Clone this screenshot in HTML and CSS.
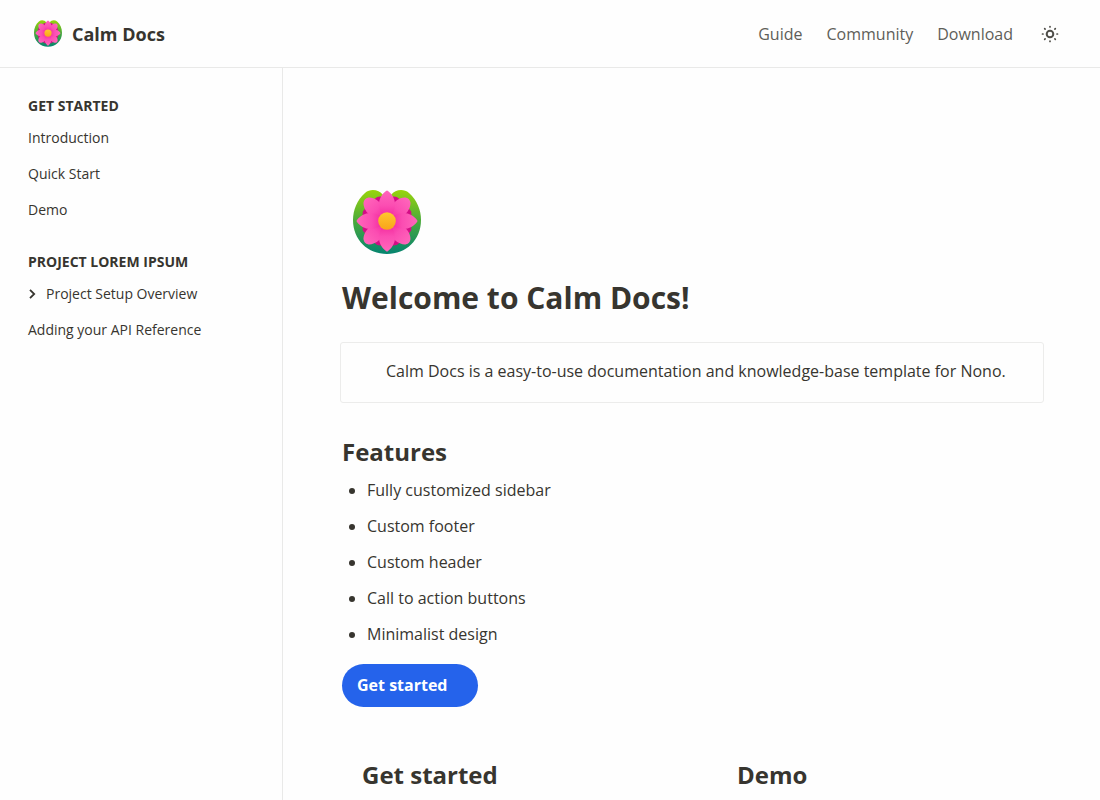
FILE: index.html
```html
<!DOCTYPE html>
<html lang="en">
<head>
<meta charset="utf-8">
<meta name="viewport" content="width=device-width, initial-scale=1">
<title>Calm Docs</title>
<link rel="stylesheet" href="styles.css">
</head>
<body>
<svg class="defs" width="0" height="0" aria-hidden="true">
  <defs>
    <linearGradient id="leaf" x1="0" y1="0" x2="0" y2="1">
      <stop offset="0" stop-color="#98d40c"/>
      <stop offset=".5" stop-color="#48a83c"/>
      <stop offset="1" stop-color="#058470"/>
    </linearGradient>
    <linearGradient id="petal" x1="0" y1="0" x2="0" y2="1">
      <stop offset="0" stop-color="#ff66bb"/>
      <stop offset=".5" stop-color="#fb4db2"/>
      <stop offset="1" stop-color="#f01c96"/>
    </linearGradient>
    <linearGradient id="core" x1="0" y1="0" x2="0" y2="1">
      <stop offset="0" stop-color="#ffc72e"/>
      <stop offset="1" stop-color="#f9a41a"/>
    </linearGradient>
    <symbol id="lotus" viewBox="0 0 68 64">
      <path fill="url(#leaf)" d="M34 14 L30 5 C26 0 18-2 12 3 C4 10 0 20 0 30 C0 50 15 64 34 64 C53 64 68 50 68 30 C68 20 64 10 56 3 C50-2 42 0 38 5 Z"/>
      <g fill="#d30c85">
        <path id="back" d="M34 31 L29 10 Q28 6 34 5 Q40 6 39 10 Z" transform="rotate(22 34 31)"/>
        <use href="#back" transform="rotate(46 34 31)"/>
        <use href="#back" transform="rotate(90 34 31)"/>
        <use href="#back" transform="rotate(136 34 31)"/>
        <use href="#back" transform="rotate(180 34 31)"/>
        <use href="#back" transform="rotate(226 34 31)"/>
        <use href="#back" transform="rotate(270 34 31)"/>
        <use href="#back" transform="rotate(316 34 31)"/>
      </g>
      <g fill="url(#petal)">
        <path id="side" d="M34 31 C29 25 26 19 26 12 C26 7 29 2 31 1 Q34-1 37 1 C39 2 42 7 42 12 C42 19 39 25 34 31 Z" transform="rotate(45 34 31)"/>
        <use href="#side" transform="rotate(90 34 31)"/>
        <use href="#side" transform="rotate(180 34 31)"/>
        <use href="#side" transform="rotate(270 34 31)"/>
        <path id="main" d="M34 31 C29 26 26 20 26 14 C26 9 29 4 33 1 Q34 0 35 1 C39 4 42 9 42 14 C42 20 39 26 34 31 Z"/>
        <use href="#main" transform="rotate(90 34 31)"/>
        <use href="#main" transform="rotate(180 34 31)"/>
        <use href="#main" transform="rotate(270 34 31)"/>
      </g>
      <circle cx="34" cy="31" r="8.8" fill="url(#core)"/>
    </symbol>
  </defs>
</svg>

<header class="topbar">
  <a class="brand" href="#">
    <svg class="brand-logo" aria-hidden="true"><use href="#lotus"/></svg>
    <span>Calm Docs</span>
  </a>
  <nav class="topnav" aria-label="Main">
    <a href="#">Guide</a>
    <a href="#">Community</a>
    <a href="#">Download</a>
    <button class="theme" type="button" aria-label="Toggle theme">
      <svg viewBox="0 0 18 18" width="18" height="18" fill="none" stroke="currentColor" stroke-linecap="round" aria-hidden="true">
        <circle cx="9" cy="9" r="3.3" stroke-width="2"/>
        <path stroke-width="1.7" d="M9 1.5v.5M9 16v.5M1.5 9h.5M16 9h.5M3.7 3.7l.4.4M13.9 13.9l.4.4M3.7 14.3l.4-.4M13.9 4.1l.4-.4"/>
      </svg>
    </button>
  </nav>
</header>

<div class="layout">
  <nav class="sidebar" aria-label="Documentation">
    <section class="group">
      <h2>GET STARTED</h2>
      <a href="#">Introduction</a>
      <a href="#">Quick Start</a>
      <a href="#">Demo</a>
    </section>
    <section class="group">
      <h2>PROJECT LOREM IPSUM</h2>
      <a href="#">
        <svg class="chevron" viewBox="0 0 8 12" width="8" height="12" fill="none" stroke="currentColor" stroke-width="1.8" aria-hidden="true"><path d="M2 1.8 6.2 6 2 10.2"/></svg>
        Project Setup Overview
      </a>
      <a href="#">Adding your API Reference</a>
    </section>
  </nav>

  <main class="content">
    <svg class="hero-logo" role="img" aria-label="Lotus"><use href="#lotus"/></svg>
    <h1>Welcome to Calm Docs!</h1>
    <p class="callout">Calm Docs is a easy-to-use documentation and knowledge-base template for Nono.</p>
    <h2>Features</h2>
    <ul class="features">
      <li>Fully customized sidebar</li>
      <li>Custom footer</li>
      <li>Custom header</li>
      <li>Call to action buttons</li>
      <li>Minimalist design</li>
    </ul>
    <a class="cta" href="#">Get started</a>
    <div class="columns">
      <h2>Get started</h2>
      <h2>Demo</h2>
    </div>
  </main>
</div>
</body>
</html>
```
FILE: styles.css
```css
* {
  box-sizing: border-box;
}

body {
  margin: 0;
  min-height: 100vh;
  display: flex;
  flex-direction: column;
  background: #fefefe;
  color: #37352f;
  font: 16px/24px "Open Sans", "Noto Sans", sans-serif;
}

h1,
h2,
p,
ul {
  margin: 0;
}

a {
  color: inherit;
  text-decoration: none;
}

.defs {
  position: absolute;
}

.topbar {
  display: flex;
  align-items: center;
  justify-content: space-between;
  height: 68px;
  padding: 0 41px 0 34px;
  border-bottom: 1px solid #e9e9e8;
}

.brand {
  display: flex;
  align-items: center;
  gap: 10px;
  font-size: 18px;
  font-weight: 700;
}

.brand-logo {
  width: 28px;
  height: 27px;
}

.topnav {
  display: flex;
  align-items: center;
  gap: 24px;
  color: #5f5e59;
}

.theme {
  display: flex;
  margin-left: 4px;
  padding: 0;
  border: 0;
  background: none;
  color: #4f4e49;
}

.layout {
  flex: 1;
  display: flex;
}

.sidebar {
  flex: 0 0 283px;
  display: flex;
  flex-direction: column;
  gap: 20px;
  padding: 24px 28px;
  border-right: 1px solid #e9e9e8;
  font-size: 14px;
}

.group {
  display: flex;
  flex-direction: column;
}

.group h2 {
  font-size: 14px;
  line-height: 28px;
}

.group a {
  display: flex;
  align-items: center;
  gap: 10px;
  line-height: 36px;
}

.content {
  flex: 1;
  display: flex;
  flex-direction: column;
  align-items: flex-start;
  padding: 122px 56px 4px 59px;
}

.hero-logo {
  width: 68px;
  height: 64px;
  margin-left: 11px;
}

.content h1 {
  margin-top: 24px;
  font-size: 30px;
  line-height: 40px;
}

.callout {
  align-self: stretch;
  margin: 24px 0 31px -2px;
  padding: 16px 36px 19px 45px;
  border: 1px solid #ececeb;
  border-radius: 3px;
}

.content h2 {
  font-size: 24px;
  line-height: 36px;
}

.features {
  padding: 2px 0 0 25px;
  line-height: 36px;
}

.cta {
  margin: 12px 0 50px;
  padding: 9px 30px 10px 15px;
  border-radius: 22px;
  background: #2563eb;
  color: #fff;
  font-weight: 700;
}

.columns {
  align-self: stretch;
  display: grid;
  grid-template-columns: 1fr 1fr;
  gap: 48px;
}

.columns h2 {
  padding-left: 20px;
}
```
